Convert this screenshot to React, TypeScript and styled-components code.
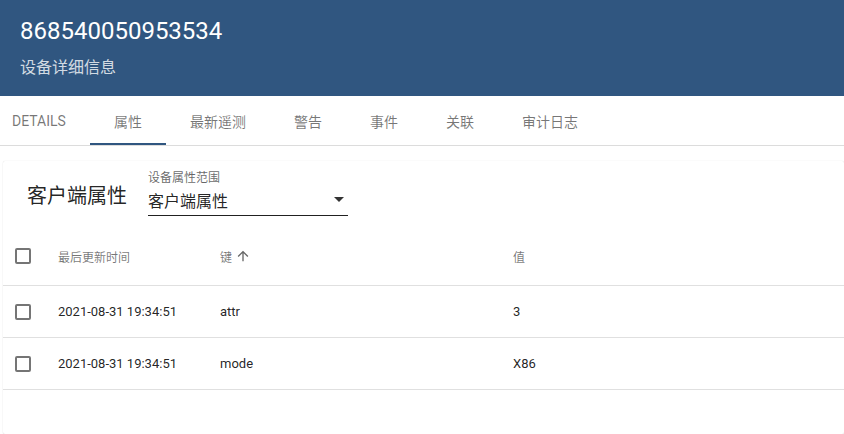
import React from "react";
import styled, { createGlobalStyle } from "styled-components";

const GlobalStyle = createGlobalStyle`
  html, body {
    margin: 0;
    padding: 0;
    background: #ffffff;
    overflow: hidden;
  }
  body {
    font-family: Roboto, "Noto Sans CJK SC", "Noto Sans", sans-serif;
    color: rgba(0, 0, 0, 0.87);
  }
  * { box-sizing: border-box; }
`;

const Page = styled.div`
  width: 844px;
  height: 434px;
  overflow: hidden;
  display: flex;
  flex-direction: column;
`;

const Header = styled.header`
  height: 96px;
  background: #305680;
  padding: 15px 20px 0;
  display: flex;
  flex-direction: column;
`;

const Title = styled.h1`
  margin: 0;
  font-size: 24px;
  font-weight: 400;
  line-height: 32px;
  color: #ffffff;
`;

const Subtitle = styled.div`
  margin-top: 11px;
  font-size: 16px;
  line-height: 20px;
  color: rgba(255, 255, 255, 0.8);
`;

const TabBar = styled.nav`
  display: flex;
  height: 50px;
  border-bottom: 1px solid #dcdcdc;
  margin-left: -12px;
`;

const Tab = styled.div<{ $active?: boolean }>`
  height: 49px;
  padding: 2px 24px 0;
  display: flex;
  align-items: center;
  font-size: 14px;
  color: rgba(0, 0, 0, 0.54);
  border-bottom: 2px solid ${(p) => (p.$active ? "#305680" : "transparent")};
`;

const Card = styled.section`
  margin: 15px 0 0 3px;
  flex: 1;
  background: #fff;
  box-shadow: 0 0 1px rgba(0, 0, 0, 0.18), 0 1px 2px rgba(0, 0, 0, 0.05);
  border-radius: 2px;
  display: flex;
  flex-direction: column;
`;

const Toolbar = styled.div`
  height: 68px;
  display: flex;
  align-items: flex-start;
  padding-left: 24px;
`;

const CardTitle = styled.h2`
  margin: 22px 0 0;
  font-size: 20px;
  font-weight: 400;
  line-height: 26px;
  color: rgba(0, 0, 0, 0.87);
`;

const SelectField = styled.div`
  margin: 10px 0 0 21px;
  width: 200px;
  display: flex;
  flex-direction: column;
`;

const SelectLabel = styled.label`
  font-size: 12px;
  line-height: 14px;
  color: rgba(0, 0, 0, 0.6);
`;

const SelectControl = styled.div`
  height: 31px;
  display: flex;
  align-items: center;
  justify-content: space-between;
  border-bottom: 1px solid rgba(0, 0, 0, 0.87);
  font-size: 16px;
  color: rgba(0, 0, 0, 0.87);
  padding: 0 4px 1px 0;
`;

const Caret = styled.span`
  width: 0;
  height: 0;
  border-left: 5px solid transparent;
  border-right: 5px solid transparent;
  border-top: 5px solid rgba(0, 0, 0, 0.8);
`;

const Row = styled.div<{ $header?: boolean }>`
  display: grid;
  grid-template-columns: 43px 162px 293px 1fr;
  align-items: center;
  height: ${(p) => (p.$header ? "57px" : "52px")};
  border-bottom: 1px solid #e0e0e0;
  padding-left: 12px;
  padding-bottom: ${(p) => (p.$header ? "2px" : "0")};
  font-size: ${(p) => (p.$header ? "12px" : "13px")};
  color: ${(p) => (p.$header ? "rgba(0,0,0,0.54)" : "rgba(0,0,0,0.87)")};
`;

const Cell = styled.div`
  display: flex;
  align-items: center;
  white-space: nowrap;
`;

const Checkbox = styled.span`
  width: 16px;
  height: 16px;
  border: 2px solid rgba(0, 0, 0, 0.54);
  border-radius: 2px;
  display: inline-block;
`;

const SortIcon = styled.svg`
  width: 16px;
  height: 16px;
  margin-left: 3px;
  fill: rgba(0, 0, 0, 0.6);
`;

const rows = [
  { time: "2021-08-31 19:34:51", key: "attr", value: "3" },
  { time: "2021-08-31 19:34:51", key: "mode", value: "X86" },
];

const tabs = ["属性", "最新遥测", "警告", "事件", "关联", "审计日志"];

export default function App() {
  return (
    <>
      <GlobalStyle />
      <Page>
        <Header>
          <Title>868540050953534</Title>
          <Subtitle>设备详细信息</Subtitle>
        </Header>
        <TabBar>
          <Tab>DETAILS</Tab>
          {tabs.map((t) => (
            <Tab key={t} $active={t === "属性"}>
              {t}
            </Tab>
          ))}
        </TabBar>
        <Card>
          <Toolbar>
            <CardTitle>客户端属性</CardTitle>
            <SelectField>
              <SelectLabel>设备属性范围</SelectLabel>
              <SelectControl>
                <span>客户端属性</span>
                <Caret />
              </SelectControl>
            </SelectField>
          </Toolbar>
          <Row $header>
            <Cell>
              <Checkbox />
            </Cell>
            <Cell>最后更新时间</Cell>
            <Cell>
              键
              <SortIcon viewBox="0 0 24 24">
                <path d="M4 12l1.41 1.41L11 7.83V20h2V7.83l5.58 5.59L20 12l-8-8-8 8z" />
              </SortIcon>
            </Cell>
            <Cell>值</Cell>
          </Row>
          {rows.map((r) => (
            <Row key={r.key}>
              <Cell>
                <Checkbox />
              </Cell>
              <Cell>{r.time}</Cell>
              <Cell>{r.key}</Cell>
              <Cell>{r.value}</Cell>
            </Row>
          ))}
        </Card>
      </Page>
    </>
  );
}
